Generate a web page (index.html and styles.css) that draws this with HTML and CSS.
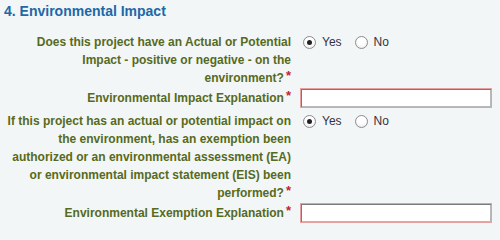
FILE: index.html
```html
<!DOCTYPE html>
<html>
<head>
<meta charset="utf-8">
<link rel="stylesheet" href="styles.css">
</head>
<body>
<h2 class="section-title">4. Environmental Impact</h2>
<div class="form">
  <div class="row q1">
    <div class="label">Does this project have an Actual or Potential Impact - positive or negative - on the environment?<span class="req">*</span></div>
    <div class="control">
      <span class="radio checked"></span><span class="opt">Yes</span>
      <span class="radio"></span><span class="opt">No</span>
    </div>
  </div>
  <div class="row input-row">
    <div class="label">Environmental Impact Explanation<span class="req">*</span></div>
    <div class="control"><span class="text-input"></span></div>
  </div>
  <div class="row q2">
    <div class="label">If this project has an actual or potential impact on the environment, has an exemption been authorized or an environmental assessment (EA) or environmental impact statement (EIS) been performed?<span class="req">*</span></div>
    <div class="control">
      <span class="radio checked"></span><span class="opt">Yes</span>
      <span class="radio"></span><span class="opt">No</span>
    </div>
  </div>
  <div class="row input-row">
    <div class="label">Environmental Exemption Explanation<span class="req">*</span></div>
    <div class="control"><span class="text-input"></span></div>
  </div>
</div>
</body>
</html>
```
FILE: styles.css
```css
html, body {
  margin: 0;
  padding: 0;
  background: #f3f6f6;
  font-family: "Liberation Sans", Arial, sans-serif;
}
.section-title {
  margin: 0;
  padding: 3px 0 0 4px;
  height: 30px;
  box-sizing: border-box;
  font-size: 14px;
  line-height: 16px;
  font-weight: bold;
  color: #2068a6;
}
.form {
  display: flex;
  flex-direction: column;
}
.row {
  display: grid;
  grid-template-columns: 291px 1fr;
  column-gap: 9px;
  align-items: start;
}
.q1 { margin-top: 3px; }
.q2 { margin-top: 4px; }
.input-row {
  margin-top: 1px;
  align-items: center;
}
.label {
  text-align: right;
  font-size: 12px;
  line-height: 18px;
  font-weight: bold;
  color: #566a22;
}
.req {
  display: inline-block;
  color: #c0272d;
  font-size: 13px;
  line-height: 14px;
  vertical-align: top;
  margin-left: 2px;
}
.control {
  display: flex;
  align-items: center;
  height: 18px;
}
.input-row .control {
  height: 20px;
}
.radio {
  width: 11px;
  height: 11px;
  border: 1px solid #8c8c8c;
  border-radius: 50%;
  background: radial-gradient(circle at 50% 35%, #ffffff 40%, #e6e6e6 100%);
  box-sizing: content-box;
  margin-left: 3px;
  display: flex;
  align-items: center;
  justify-content: center;
}
.radio.checked::after {
  content: "";
  width: 5px;
  height: 5px;
  border-radius: 50%;
  background: #222;
}
.opt {
  font-size: 12px;
  color: #333344;
  margin-left: 6px;
  margin-right: 10px;
}
.text-input {
  display: block;
  width: 192px;
  height: 20px;
  box-sizing: border-box;
  background: #fff;
  border: 1px solid #e6a0a0;
  box-shadow: inset 1px 1px 0 #7a7a7a, inset -1px -1px 0 #b8b8b8;
}
```
